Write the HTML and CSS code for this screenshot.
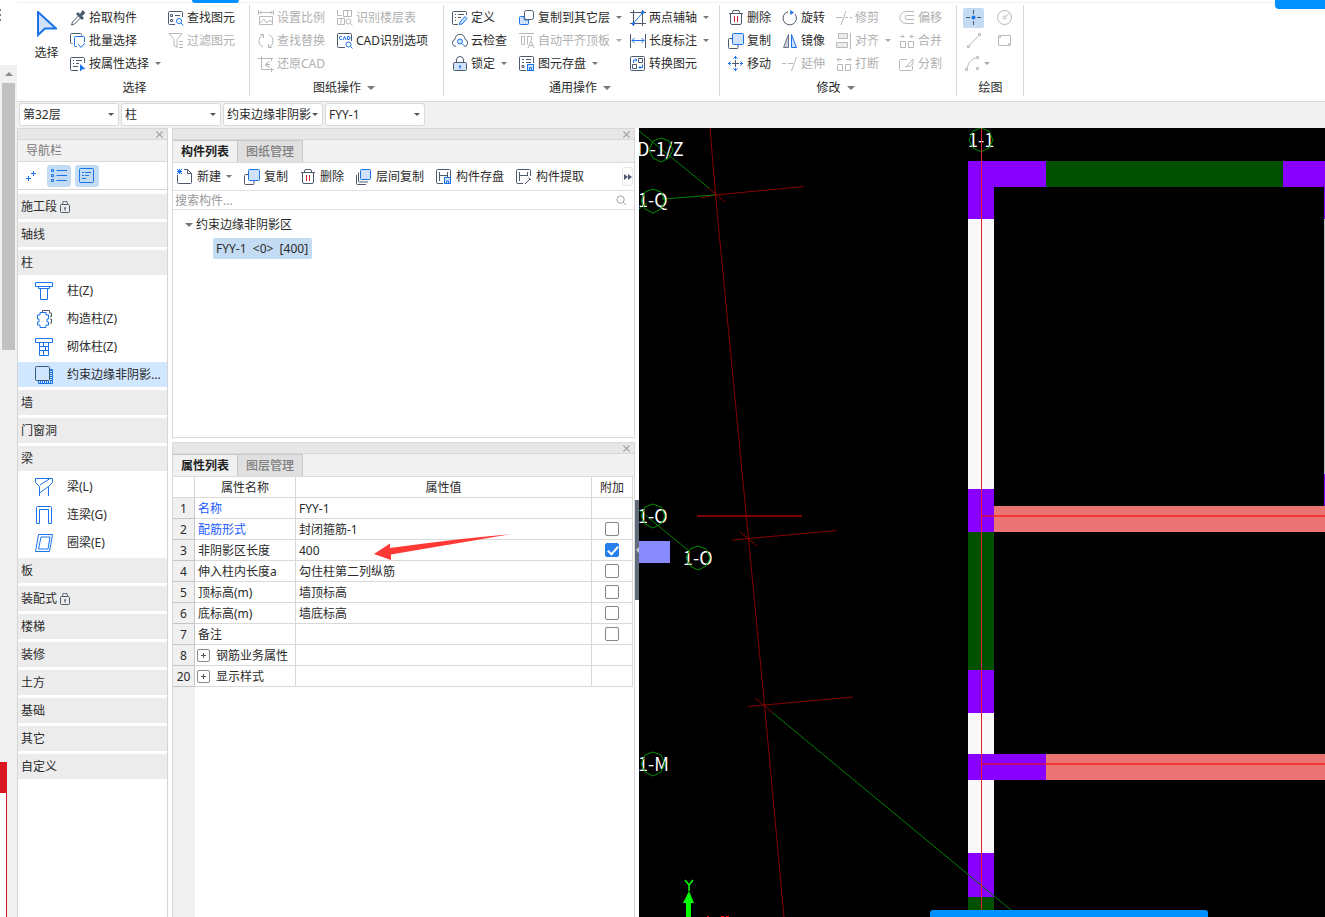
FILE: index.html
```html
<!DOCTYPE html>
<html lang="zh-CN">
<head>
<meta charset="utf-8">
<title>构件列表</title>
<link rel="stylesheet" href="styles.css">
</head>
<body>
<svg class="sprite" aria-hidden="true">
  <symbol id="copy" viewBox="0 0 16 16"><path class="d" d="M4 5.500H1.500a1 1 0 0 0-1 1v8a1 1 0 0 0 1 1H9a1 1 0 0 0 1-1V12"/><rect class="bf" x="4.500" y=".500" width="11" height="11" rx="1"/></symbol>
  <symbol id="trash" viewBox="0 0 16 16"><path class="d" d="M1 3.500h14M4.500 3.500V2A1.500 1.500 0 0 1 6 .500h4A1.500 1.500 0 0 1 11.500 2v1.500M2.500 3.500V13a1.500 1.500 0 0 0 1.500 1.500h8a1.500 1.500 0 0 0 1.500-1.500V3.500"/><path class="r" d="M6.500 6v6M9.500 6v6"/></symbol>
  <symbol id="lock" viewBox="0 0 10 12"><rect class="d" x=".500" y="3.500" width="9" height="8" rx="1"/><path class="d" d="M2.500 3.500V2.500a2 2 0 0 1 5 0v1"/><path class="d" d="M5 6.500v3M4 7h2"/></symbol>
</svg>
<div class="page">
  <aside class="strip">
    <div class="strip-top"><i></i><i></i><i></i></div>
    <div class="strip-arrow"><span class="up"></span></div>
    <div class="strip-thumb"></div>
    <div class="strip-red"></div>
    <div class="strip-frame"></div>
  </aside>
  <div class="app">
    <span class="blob blob-left"></span><span class="blob blob-right"></span><span class="blob blob-bottom"></span>
    <header class="ribbon">
      <section class="group g-select">
        <button class="big"><svg class="bigicon" viewBox="0 0 20 26"><path class="bf" d="M1 1v23l7-6.500h11z"/></svg><span>选择</span></button>
        <button class="tool c2"><svg viewBox="0 0 16 16"><path class="d" d="M1.500 15l1-3L9 5.500l2 2L4.500 14z"/><path class="df" d="M6 4l2-2 2 2 2-3c1-1.500 4 1.500 2.500 3L12 6l2 2-2 2z"/></svg>拾取构件</button>
        <button class="tool c3"><svg viewBox="0 0 16 16"><path class="d" d="M7 14.500H1.500a1 1 0 0 1-1-1v-11a1 1 0 0 1 1-1h12a1 1 0 0 1 1 1V7M7 5.500h5M2.500 4.500h2v2h-2zM2.500 9.500h2v2h-2z"/><circle class="b" cx="11" cy="11" r="2.500"/><path class="b" d="M13 13l2.500 2.500"/></svg>查找图元</button>
        <button class="tool c2"><svg viewBox="0 0 16 16"><path class="d" d="M2.500 10.500h-1a1 1 0 0 1-1-1v-8a1 1 0 0 1 1-1h9a1 1 0 0 1 1 1v1"/><path class="b" d="M7 13.500H5.500a1 1 0 0 1-1-1v-8a1 1 0 0 1 1-1h8a1 1 0 0 1 1 1V9M8 11l3 3.500 4-4.500"/></svg>批量选择</button>
        <button class="tool c3" disabled><svg viewBox="0 0 16 16"><path class="g" d="M1 .500h13L9 6.500v8l-3-2v-6zM11 8.500h4M11 11.500h4M11 14.500h4"/></svg>过滤图元</button>
        <button class="tool c2"><svg viewBox="0 0 16 16"><path class="d" d="M8 14.500H1.500a1 1 0 0 1-1-1v-11a1 1 0 0 1 1-1h12a1 1 0 0 1 1 1V7M3 4.500h1M6 4.500h6M3 7.500h1M6 7.500h3M3 10.500h5"/><path class="bs" d="M10 8l5.500 5-3 .300-2.500 2.200z"/></svg>按属性选择<i class="caret"></i></button>
        <h2>选择</h2>
      </section>
      <section class="group g-draw">
        <button class="tool" disabled><svg viewBox="0 0 16 16"><path class="g" d="M1 2.500h14M.500 0v5M15.500 0v5M3 1v3M13 1v3M1.500 6.500h13v8h-13zM2 13l4-4 3 4 3-3 2.500 3"/></svg>设置比例</button>
        <button class="tool" disabled><svg viewBox="0 0 16 16"><path class="g" d="M.500 0v5.500H5M6.500.500h8v6h-8zM10.500.500v6M.500 8.500v6h7v-6zM4 8.500v6"/><circle class="g" cx="11.500" cy="11.500" r="2.500"/><path class="g" d="M13.500 13.500l2 2"/></svg>识别楼层表</button>
        <button class="tool" disabled><svg viewBox="0 0 16 16"><path class="g" d="M5 14A6.500 6.500 0 0 1 5 2M2 1.500h3.500V5M11 2a6.500 6.500 0 0 1 0 12M14 14.500h-3.500V11"/></svg>查找替换</button>
        <button class="tool"><svg viewBox="0 0 16 16"><path class="d" d="M8 14.500H1.500a1 1 0 0 1-1-1v-12a1 1 0 0 1 1-1h12a1 1 0 0 1 1 1V8"/><path class="b" d="M5 3.500H3.500C2 3.500 2 6.500 3.500 6.500H5M6 7l1.500-3.500L9 7M10.500 3.500v3H12c1.500 0 1.500-3 0-3z"/><circle class="b" cx="11.500" cy="11.500" r="2.500"/><path class="b" d="M13.500 13.500l2 2"/></svg>CAD识别选项</button>
        <button class="tool" disabled><svg viewBox="0 0 16 16"><path class="g" d="M0 2.500h15M3.500 0v13.500H16M13.500 2v3M13.500 12v4M12 6c-2 0-4 1-4 2.500S9 11 12 11M7 8.500h5M10 6.500l-2 2 2 2"/></svg>还原CAD</button>
        <h2>图纸操作<i class="caret large"></i></h2>
      </section>
      <section class="group g-common">
        <button class="tool"><svg viewBox="0 0 16 16"><path class="d" d="M6 14.500H1.500a1 1 0 0 1-1-1v-11a1 1 0 0 1 1-1h12a1 1 0 0 1 1 1V5M3 4.500h1M6 4.500h6M3 7.500h1M6 7.500h3M3 10.500h1"/><path class="bf" d="M13 6.500l2 2-5 5.500-2.500.500.500-2.500z"/></svg>定义</button>
        <button class="tool"><svg viewBox="0 0 16 16"><path class="bf" d="M5 6.500H1.500a1 1 0 0 0-1 1v6a1 1 0 0 0 1 1h7a1 1 0 0 0 1-1V10H6a1 1 0 0 1-1-1z"/><rect class="d" x="5.500" y=".500" width="9" height="9" rx="2"/></svg>复制到其它层<i class="caret"></i></button>
        <button class="tool"><svg viewBox="0 0 16 16"><path class="d" d="M3.500 0v16M12.500 0v16M0 2.500h16M0 13.500h16"/><path class="b" d="M2 15L14 1"/><circle class="bs" cx="3.500" cy="13.500" r="1.500"/><circle class="bs" cx="12.500" cy="2.500" r="1.500"/></svg>两点辅轴<i class="caret"></i></button>
        <button class="tool"><svg viewBox="0 0 16 16"><path class="d" d="M4 13.500a3.700 3.700 0 0 1-1-7.200 5 5 0 0 1 10 0 3.700 3.700 0 0 1-.500 7.200"/><circle class="bf" cx="8" cy="8.500" r="2.500"/><path class="b" d="M10 10.500l3 3"/></svg>云检查</button>
        <button class="tool" disabled><svg viewBox="0 0 16 16"><path class="g" d="M0 .500h15M2.500 3.500h3v8h-3zM8.500 11.500v-8h4v4M9 15l3-7 3 7M10 12.500h4"/></svg>自动平齐顶板<i class="caret"></i></button>
        <button class="tool"><svg viewBox="0 0 16 16"><path class="d" d="M.500 1v14M15.500 1v14"/><path class="b" d="M2 7.500h12M4.500 5L2 7.500 4.500 10M11.500 5L14 7.500 11.500 10"/></svg>长度标注<i class="caret"></i></button>
        <button class="tool"><svg viewBox="0 0 16 16"><path class="d" d="M4.500 6V4a3.500 3.500 0 0 1 7 0v2"/><rect class="lb" x="1.500" y="6.500" width="13" height="8" rx="1"/><path class="b" d="M8 9v4M7 10.500h2"/></svg>锁定<i class="caret"></i></button>
        <button class="tool"><svg viewBox="0 0 16 16"><path class="d" d="M7 14.500H1.500a1 1 0 0 1-1-1v-12a1 1 0 0 1 1-1h12a1 1 0 0 1 1 1V7M7 3.500h5M7 6.500h5M3 3.500h2M3 6.500h2M3 9.500h2v2H3z"/><rect class="bf" x="8.500" y="8.500" width="6" height="6"/><path class="b" d="M10.500 14v-2.500h2V14"/></svg>图元存盘<i class="caret"></i></button>
        <button class="tool"><svg viewBox="0 0 16 16"><rect class="d" x=".500" y=".500" width="14" height="14" rx="1"/><path class="d" d="M8.500 2.500h4v4h-4zM2.500 8.500h4v4h-4z"/><path class="b" d="M3.500 7V4H7M5.500 2.500L7 4 5.500 5.500M12.500 8.500v3H9M10.500 10L9 11.500l1.500 1.500"/></svg>转换图元</button>
        <h2>通用操作<i class="caret large"></i></h2>
      </section>
      <section class="group g-modify">
        <button class="tool"><svg><use href="#trash"/></svg>删除</button>
        <button class="tool"><svg viewBox="0 0 16 16"><path class="d" d="M6 1.700a6.700 6.700 0 1 0 7 2.300"/><path class="bs" d="M8 0l4 2.500L8.500 5z"/></svg>旋转</button>
        <button class="tool" disabled><svg viewBox="0 0 16 16"><path class="g" d="M0 7.500h6M9 7.500h3M14 7.500h2M5 15L10 1"/></svg>修剪</button>
        <button class="tool" disabled><svg viewBox="0 0 16 16"><path class="g" d="M15 1.500H7a6 6 0 0 0 0 12h8M15 5.500H8a2 2 0 0 0 0 4h7"/></svg>偏移</button>
        <button class="tool"><svg><use href="#copy"/></svg>复制</button>
        <button class="tool"><svg viewBox="0 0 16 16"><path class="df2" d="M6.500 1.500v13h-5z"/><path class="bf" d="M9.500 1.500v13h5z"/></svg>镜像</button>
        <button class="tool" disabled><svg viewBox="0 0 16 16"><path class="g gf" d="M2.500.500h9v5h-9zM.500 9.500h11v5H.500z"/><path class="g" d="M14.500 0v16"/></svg>对齐<i class="caret"></i></button>
        <button class="tool" disabled><svg viewBox="0 0 16 16"><path class="g" d="M1.500 8.500h5v6h-5zM9.500 8.500h5v6h-5zM1 3.500h4M3 1.500l2 2-2 2M15 3.500h-4M13 1.500l-2 2 2 2"/></svg>合并</button>
        <button class="tool"><svg viewBox="0 0 16 16"><path class="d" d="M7.500 4v7M4 7.500h7"/><path class="b" d="M7.500 0v3M7.500 12v3M0 7.500h3M12 7.500h3M5.500 2.500l2-2 2 2M5.500 12.500l2 2 2-2M2.500 5.500l-2 2 2 2M12.500 5.500l2 2-2 2"/></svg>移动</button>
        <button class="tool" disabled><svg viewBox="0 0 16 16"><path class="g" d="M0 7.500h4M6 7.500h5M9.500 15L14.500 1"/></svg>延伸</button>
        <button class="tool" disabled><svg viewBox="0 0 16 16"><path class="g" d="M1.500 8.500h5v6h-5zM9.500 8.500h5v6h-5zM1 3.500h5M3 1.500l-2 2 2 2M10 3.500h5M13 1.500l2 2-2 2"/></svg>打断</button>
        <button class="tool" disabled><svg viewBox="0 0 16 16"><path class="g" d="M8 3.500H1.500a1 1 0 0 0-1 1v9a1 1 0 0 0 1 1h11a1 1 0 0 0 1-1V10M8 10l6-7v5l-4 2.500H6"/></svg>分割</button>
        <h2>修改<i class="caret large"></i></h2>
      </section>
      <section class="group g-paint">
        <button class="tool active" aria-label="点"><svg viewBox="0 0 16 16"><path class="d" d="M7.500 0v4M7.500 11v4M0 7.500h4M11 7.500h4"/><circle class="bs" cx="7.500" cy="7.500" r="2"/></svg></button>
        <button class="tool" disabled aria-label="圆"><svg viewBox="0 0 16 16"><circle class="g" cx="7.500" cy="7.500" r="7"/><circle class="g" cx="7.500" cy="7.500" r="1.500"/><path class="g" d="M8.500 6.500l3.500-3"/></svg></button>
        <button class="tool" disabled aria-label="直线"><svg viewBox="0 0 16 16"><path class="g" d="M3 12.500l10-10M1.500 12.500h2v2h-2zM12.500.500h2v2h-2z"/></svg></button>
        <button class="tool" disabled aria-label="矩形"><svg viewBox="0 0 16 16"><path class="g" d="M1.500 2.500h12v10h-12zM3.500 2.500v2M1.500 4.500h2M11.500 12.500v-2h2"/></svg></button>
        <button class="tool" disabled aria-label="弧"><svg viewBox="0 0 16 16"><path class="g" d="M2 13C3 7 6 3 12 1.500M.500 12.500h2v2h-2zM11.500.500h2v2h-2zM11.500 11.500h2v2h-2z"/></svg><i class="caret"></i></button>
        <h2>绘图</h2>
      </section>
    </header>
    <nav class="levels">
      <label class="pick"><select aria-label="楼层"><option>第32层</option></select></label>
      <label class="pick"><select aria-label="构件类型"><option>柱</option></select></label>
      <label class="pick"><select aria-label="构件"><option>约束边缘非阴影</option></select></label>
      <label class="pick"><select aria-label="名称"><option>FYY-1</option></select></label>
    </nav>
    <main class="work">
      <aside class="nav">
        <div class="bar"><button class="close" aria-label="关闭导航栏"></button></div>
        <h3>导航栏</h3>
        <div class="navtools">
          <button aria-label="添加"><svg viewBox="0 0 16 16"><path class="b" d="M8 5.500h5M10.500 3v5M3 10.500h5M5.500 8v5"/></svg></button>
          <button class="on" aria-label="列表"><svg viewBox="0 0 16 16"><path class="b" d="M5.500 2.500H16M5.500 7.500H16M5.500 12.500H16M.500 1.500h2v2h-2zM.500 6.500h2v2h-2zM.500 11.500h2v2h-2z"/></svg></button>
          <button class="on" aria-label="详细"><svg viewBox="0 0 16 16"><rect class="b" x=".500" y=".500" width="14" height="14" rx="1"/><path class="b" d="M3 4.500h2M6 4.500h6M3 7.500h2M6 7.500h4M3 10.500h4"/></svg></button>
        </div>
        <ul class="cats">
          <li>施工段<svg class="lock"><use href="#lock"/></svg></li>
          <li>轴线</li>
          <li>柱</li>
          <li class="sub"><svg viewBox="0 0 18 18"><path class="b" d="M.500.500h17v4H.500zM3.500 4.500v2h11v-2M5.500 6.500v11h7v-11"/></svg>柱(Z)</li>
          <li class="sub"><svg viewBox="0 0 18 18"><path class="d" d="M7.500 2V.500h7V3h2v3.500H15M15 9h1.500v4H15"/><path class="b" d="M5 2.500h6V5h2.500v4H12v3h1.500v3H11v2.500H5V15H2.500v-3H4V9H2.500V5H5z"/></svg>构造柱(Z)</li>
          <li class="sub"><svg viewBox="0 0 18 18"><path class="b" d="M.500.500h17v4H.500zM4.500 4.500v13h9v-13M4.500 8.500h9M4.500 12.500h9M8.500 4.500v4M10.500 8.500v4M8.500 12.500v5"/></svg>砌体柱(Z)</li>
          <li class="sub chosen"><svg viewBox="0 0 18 18"><path class="bd" d="M3 16h13V4"/><path class="b" d="M3.500 15v2.500h14v-14H15"/><rect class="dl" x=".500" y=".500" width="14" height="14" rx="1"/></svg>约束边缘非阴影...</li>
          <li>墙</li>
          <li>门窗洞</li>
          <li>梁</li>
          <li class="sub"><svg viewBox="0 0 18 18"><path class="b" d="M.500.500h17v4l-4 4V18M.500.500v4l4 4V18M5 7L15 .500M4.500 15l9-6.500"/></svg>梁(L)</li>
          <li class="sub"><svg viewBox="0 0 18 18"><path class="b" d="M1.500 17.500v-16a1 1 0 0 1 1-1h13a1 1 0 0 1 1 1v16h-3v-14h-9v14z"/></svg>连梁(G)</li>
          <li class="sub"><svg viewBox="0 0 18 18"><path class="b" d="M3.500.500h14l-3 17H.500zM6 3h9l-2 12H3.500z"/></svg>圈梁(E)</li>
          <li>板</li>
          <li>装配式<svg class="lock"><use href="#lock"/></svg></li>
          <li>楼梯</li>
          <li>装修</li>
          <li>土方</li>
          <li>基础</li>
          <li>其它</li>
          <li>自定义</li>
        </ul>
      </aside>
      <div class="panels">
        <section class="panel list">
          <div class="bar"><button class="close" aria-label="关闭构件列表"></button></div>
          <div class="tabs"><button class="tab current">构件列表</button><button class="tab">图纸管理</button></div>
          <div class="tools">
            <button class="tool"><svg viewBox="0 0 16 16"><path class="d" d="M.500 6v7.500a1 1 0 0 0 1 1h12a1 1 0 0 0 1-1V4.500l-4-4H7M10.500.500v4h4"/><path class="b" d="M0 0l5 5M5 0L0 5M2.500 0v5M0 2.500h5"/></svg>新建<i class="caret"></i></button>
            <button class="tool"><svg><use href="#copy"/></svg>复制</button>
            <button class="tool"><svg><use href="#trash"/></svg>删除</button>
            <button class="tool"><svg viewBox="0 0 16 16"><path class="d" d="M2.500 3.500V12a1 1 0 0 0 1 1h8.500M.500 6v8.500a1 1 0 0 0 1 1H10"/><rect class="bf" x="4.500" y=".500" width="10" height="10" rx="1"/></svg>层间复制</button>
            <button class="tool"><svg viewBox="0 0 16 16"><path class="d" d="M7 14.500H1.500a1 1 0 0 1-1-1v-12a1 1 0 0 1 1-1h12a1 1 0 0 1 1 1V8M3.500 12V3M3.500 6.500h8M11.500 3v5"/><rect class="bf" x="8.500" y="8.500" width="6" height="6"/><path class="b" d="M10.500 14v-2h2v2"/></svg>构件存盘</button>
            <button class="tool"><svg viewBox="0 0 16 16"><path class="d" d="M7 14.500H1.500a1 1 0 0 1-1-1v-12a1 1 0 0 1 1-1h12a1 1 0 0 1 1 1V7M3.500 12V3M3.500 6.500h8M11.500 3v4M9 15l5-5M12.500 8.500l2.500 2.500"/></svg>构件提取</button>
            <button class="more" aria-label="更多"><i></i><i></i></button>
          </div>
          <div class="search"><input type="text" aria-label="搜索构件" placeholder="搜索构件..."><svg viewBox="0 0 12 12"><circle cx="5" cy="5" r="4"/><path d="M8 8l3 3"/></svg></div>
          <div class="tree"><div class="root"><i class="caret large"></i>约束边缘非阴影区</div><div class="leaf">FYY-1&nbsp; &lt;0&gt;&nbsp; [400]</div></div>
        </section>
        <section class="panel props">
          <div class="bar"><button class="close" aria-label="关闭属性列表"></button></div>
          <div class="tabs"><button class="tab current">属性列表</button><button class="tab">图层管理</button></div>
          <div class="sheet">
            <table>
              <colgroup><col class="c-num"><col class="c-name"><col><col class="c-add"></colgroup>
              <thead><tr><th></th><th>属性名称</th><th>属性值</th><th>附加</th></tr></thead>
              <tbody>
                <tr><th>1</th><td class="link">名称</td><td>FYY-1</td><td></td></tr>
                <tr><th>2</th><td class="link">配筋形式</td><td>封闭箍筋-1</td><td><input type="checkbox" aria-label="配筋形式附加"></td></tr>
                <tr><th>3</th><td>非阴影区长度</td><td>400</td><td><input type="checkbox" aria-label="非阴影区长度附加" checked></td></tr>
                <tr><th>4</th><td>伸入柱内长度a</td><td>勾住柱第二列纵筋</td><td><input type="checkbox" aria-label="伸入柱内长度附加"></td></tr>
                <tr><th>5</th><td>顶标高(m)</td><td>墙顶标高</td><td><input type="checkbox" aria-label="顶标高附加"></td></tr>
                <tr><th>6</th><td>底标高(m)</td><td>墙底标高</td><td><input type="checkbox" aria-label="底标高附加"></td></tr>
                <tr><th>7</th><td>备注</td><td></td><td><input type="checkbox" aria-label="备注附加"></td></tr>
                <tr><th>8</th><td><button class="plus" aria-label="展开钢筋业务属性"></button>钢筋业务属性</td><td></td><td></td></tr>
                <tr><th>20</th><td><button class="plus" aria-label="展开显示样式"></button>显示样式</td><td></td><td></td></tr>
              </tbody>
            </table>
            <div class="below"></div>
            <svg class="pointer" viewBox="0 0 138 28"><path d="M0 20L16 9.500v4.500Q80 5 138 0 80 10 17 20.500v5.500z"/></svg>
          </div>
        </section>
        <button class="grip" aria-label="折叠"></button>
      </div>
      <div class="canvas">
        <svg class="drawing">
          <g transform="translate(-639 -128)" shape-rendering="crispEdges">
            <path fill="#8800ff" d="M968 161h78v26h-52v32h-26zM1283 161h42v26h-42zM968 489h26v43h-26zM968 670h26v43h-26zM968 754h78v26h-78zM968 853h26v44h-26zM1324 187h1v32h-1zM1324 474h1v58h-1z"/>
            <path fill="#005000" d="M1046 161h237v26h-237zM968 532h26v138h-26zM968 897h26v20h-26z"/>
            <path fill="#f8f8f8" d="M968 219h26v270h-26zM968 713h26v41h-26zM968 780h26v73h-26z"/>
            <path fill="#bbb" d="M1324 219h1v255h-1z"/>
            <path fill="#ea7373" d="M994 506h1200v26H994zM1046 754h1148v26H1046z"/>
            <path fill="#f93437" d="M994 515h1200v2H994zM1046 763h1148v2H1046z"/>
            <path fill="#bd0a75" d="M981 515h13v2h-13zM981 763h65v2h-65z"/>
            <path fill="#800000" d="M697 515h105v2H697z"/>
            <path fill="#8a8aff" d="M639 541h31v22h-31z"/>
          </g>
          <g transform="translate(-639 -128)" fill="none">
            <path stroke="#8a0000" d="M710 128l5.500 67 33 344 16 166 19.500 212M701 198l14-3 89-8.500M707 187l18 15M732 540l105-9.500M740 532l17 14M748 706.500l105-9.500M755 698l18 15"/>
            <path stroke="#008000" d="M639 131l70 57M662 199l53-4M639 510l50 41M773 713l238 197M639 209l8-6"/>
            <g class="axis"><text x="637" y="156">D-1/Z</text><text x="638" y="207">1-Q</text><text x="968" y="147">1-1</text><text x="638" y="523">1-O</text><text x="683" y="565">1-O</text><text x="638" y="771">1-M</text></g>
            <g stroke="#009000">
              <path id="ring" d="M661 138l8 3 4 9-4 8-8 4-8-4-4-8 4-9z"/>
              <use href="#ring" x="-8" y="51"/><use href="#ring" x="320" y="-10"/><use href="#ring" x="-8" y="366"/><use href="#ring" x="37" y="408"/><use href="#ring" x="-8" y="614"/>
            </g>
            <rect x="981" y="128" width="1" height="1200" fill="#e02030"/>
            <path stroke="#0f0" stroke-width="1.500" d="M685 880l4 5 4-5M689 885v6"/>
            <path fill="#0f0" d="M689 891l5 12h-3v14h-5v-14h-3z"/>
            <path stroke="red" d="M707 916.500h2M721 916.500h3M726 916.500h3"/>
          </g>
        </svg>
      </div>
    </main>
  </div>
</div>
</body>
</html>
```
FILE: styles.css
```css
* { box-sizing: border-box; }
html, body { height: 100%; margin: 0; }
body { font: 12px/16px "Noto Sans", "Noto Sans CJK SC", sans-serif; color: #2b2b2b; background: #fff; overflow: hidden; }
button, select, input { font: inherit; color: inherit; margin: 0; padding: 0; border: 0; background: none; }
h2, h3, ul { margin: 0; padding: 0; font-weight: 400; font-size: 12px; }
.sprite { position: absolute; width: 0; height: 0; }

.d { fill: none; stroke: #4d5a6e; }
.df { fill: #4d5a6e; }
.df2 { fill: #ccd0d8; stroke: #6b7587; }
.b { fill: none; stroke: #1a73e8; }
.bf { fill: #cfe2fa; stroke: #1a73e8; }
.lb { fill: #cfe2fa; stroke: #4d5a6e; }
.bs { fill: #1a73e8; }
.bd { fill: none; stroke: #1a73e8; stroke-width: 2; stroke-dasharray: 1 1; }
.dl { fill: #cfe5ff; stroke: #34597f; }
.r { fill: none; stroke: #d0202a; }
.g { fill: none; stroke: #b9b9b9; }
.gf { fill: #ececec; }

.page { display: flex; height: 100vh; }
.strip { flex: none; width: 17px; display: flex; flex-direction: column; background: #f0f0f0; }
.strip-top { height: 65px; padding-top: 9px; display: flex; flex-direction: column; gap: 3px; background: #fff; }
.strip-top i { width: 1px; height: 2px; background: #777; }
.strip-arrow { height: 18px; display: flex; align-items: center; justify-content: center; }
.up { border: 4px solid transparent; border-top: 0; border-bottom-color: #8a8a8a; }
.strip-thumb { height: 267px; margin: 0 2px 412px; background: #c1c1c1; }
.strip-red { width: 7px; height: 31px; background: #d9161f; }
.strip-frame { flex: 1; width: 7px; border-right: 1px solid #d9161f; background: #fff; }

.app { position: relative; flex: 1; min-width: 0; display: flex; flex-direction: column; }
.blob { position: absolute; z-index: 3; background: #0090ff; }
.blob-left { left: 175px; top: 0; width: 47px; height: 3px; border-radius: 0 0 6px 6px; }
.blob-right { right: 0; top: 0; width: 50px; height: 9px; border-radius: 0 0 0 4px; }
.blob-bottom { left: 913px; bottom: 0; width: 278px; height: 7px; border-radius: 3px 3px 0 0; }

.ribbon { flex: none; display: flex; padding-top: 3px; background: linear-gradient(#fff 2px, #f0f0f0 2px, #f0f0f0 3px, #fff 3px); border-bottom: 1px solid #d8d8d8; }
.group { position: relative; display: grid; grid-template-rows: repeat(3, 23px) 26px; padding-top: 3px; }
.group::after { content: ""; position: absolute; right: 0; top: 2px; bottom: 5px; width: 1px; background: #d9d9d9; }
.group h2 { grid-column: 1 / -1; display: flex; align-items: center; justify-content: center; gap: 6px; }
.g-select { grid-template-columns: 27px 88px 68px; column-gap: 10px; padding-left: 16px; padding-right: 14px; }
.g-draw { grid-template-columns: 68px 93px; column-gap: 11px; padding-left: 8px; padding-right: 14px; }
.g-common { grid-template-columns: 57px 101px 78px; column-gap: 10px; padding-left: 8px; padding-right: 12px; }
.g-modify { grid-template-columns: 43px 43px 52px 44px; column-gap: 11px; padding-left: 8px; padding-right: 14px; }
.g-paint { grid-template-columns: 24px 24px; column-gap: 7px; padding-left: 6px; padding-right: 6px; }
.c2 { grid-column: 2; }
.c3 { grid-column: 3; }
.tool { display: flex; align-items: center; gap: 3px; white-space: nowrap; }
.tool svg { flex: none; width: 16px; height: 16px; }
.tool:disabled { color: #b0b0b0; }
.g-paint .tool { width: 21px; height: 20px; align-self: center; justify-content: center; border-radius: 2px; }
.g-paint .active { background: #c3dbf3; }
.big { grid-row: 1 / 4; display: flex; flex-direction: column; align-items: center; padding-top: 5px; gap: 8px; white-space: nowrap; }
.bigicon { width: 20px; height: 26px; stroke-width: 2; }
.caret { flex: none; width: 0; margin-left: 3px; border: 3px solid transparent; border-top-color: #777; border-bottom: 0; }
.caret.large { margin-left: 0; border-width: 4px 4px 0; }
.g-paint .caret { margin: 0 -8px 0 0; }
:disabled .caret { border-top-color: #aaa; }

.levels { flex: none; display: flex; gap: 2px; height: 26px; padding: 1px 2px; background: #f1f1f1; }
.pick { position: relative; width: 100px; height: 23px; }
.pick select { width: 100%; height: 100%; padding: 0 8px 0 3px; appearance: none; border: 1px solid #d9d9d9; border-radius: 3px; background: #fff; }
.pick::after { content: ""; position: absolute; right: 5px; top: 10px; border: 3px solid transparent; border-top-color: #555; border-bottom: 0; }

.work { flex: 1; min-height: 0; display: flex; }
.bar { flex: none; height: 12px; display: flex; justify-content: flex-end; align-items: center; padding-right: 3px; background: #e7e7e7; border: 1px solid #d8d8d8; border-width: 1px 0; }
.close { position: relative; width: 9px; height: 9px; }
.close::before, .close::after { content: ""; position: absolute; left: 0; top: 4px; width: 9px; height: 1px; background: #999; transform: rotate(45deg); }
.close::after { transform: rotate(-45deg); }
.nav { flex: none; width: 151px; border: 1px solid #d5d5d5; border-width: 0 1px; }
.nav h3 { height: 22px; padding: 3px 8px; color: #777; background: #f1f1f1; border-bottom: 1px solid #dcdcdc; }
.navtools { display: flex; align-items: center; gap: 4px; height: 28px; padding-left: 1px; border-bottom: 1px solid #d5d5d5; }
.navtools button { width: 24px; height: 22px; border-radius: 3px; display: flex; align-items: center; justify-content: center; }
.navtools svg { width: 16px; height: 16px; }
.navtools .on { background: #c3dbf3; }
.cats { list-style: none; display: grid; gap: 3px; padding-top: 4px; }
.cats li { height: 25px; display: flex; align-items: center; gap: 3px; padding-left: 3px; background: #ececec; white-space: nowrap; }
.cats .sub { gap: 14px; padding-left: 17px; background: none; }
.cats .chosen { background: #d1e6ff; }
.sub svg { flex: none; width: 18px; height: 18px; }
.cats .lock { width: 10px; height: 12px; }

.panels { position: relative; flex: none; width: 467px; padding: 0 0 0 4px; margin-right: 4px; display: flex; flex-direction: column; gap: 4px; }
.panel { display: flex; flex-direction: column; border: 1px solid #d8d8d8; border-width: 0 1px 1px; background: #fff; }
.list { height: 310px; }
.props { flex: 1; min-height: 0; border-bottom: 0; }
.tabs { flex: none; display: flex; height: 23px; background: #f1f1f1; border-bottom: 1px solid #dcdcdc; }
.tab { width: 65px; color: #808080; background: #e0e0e0; border-right: 1px solid #c8c8c8; border-top: 1px solid #c8c8c8; font-weight: 500; }
.tab.current { color: #222; background: #f1f1f1; font-weight: 700; }
.tools { flex: none; display: flex; align-items: center; gap: 12px; height: 28px; padding: 0 1px 0 4px; border-bottom: 1px solid #e0e0e0; }
.tools .tool { gap: 4px; }
.tools .caret { margin-left: 1px; }
.more { width: 11px; height: 19px; margin-left: auto; border: 1px solid #e6e6e6; border-radius: 3px; display: flex; align-items: center; justify-content: center; }
.more i { border: 3px solid transparent; border-left: 4px solid #4d5a6e; border-right: 0; }
.search { flex: none; display: flex; align-items: center; height: 19px; padding: 0 7px 0 2px; border-bottom: 1px solid #e0e0e0; }
.search input { flex: 1; min-width: 0; height: 18px; outline: 0; }
.search input::placeholder { color: #999; opacity: 1; }
.search svg { width: 11px; height: 11px; fill: none; stroke: #999; }
.tree { padding: 3px 12px; }
.root { display: flex; align-items: center; gap: 3px; height: 24px; }
.leaf { width: max-content; margin: 1px 0 0 28px; height: 21px; line-height: 21px; padding: 0 4px 0 3px; border-radius: 2px; background: #c3dbf3; white-space: nowrap; }

.sheet { position: relative; flex: 1; display: flex; flex-direction: column; }
table { width: calc(100% - 1px); border-collapse: separate; border-spacing: 0; table-layout: fixed; }
.c-num { width: 22px; }
.c-name { width: 101px; }
.c-add { width: 41px; }
th, td { height: 21px; padding: 2px 0 0 3px; border: 1px solid #d9d9d9; border-width: 0 1px 1px 0; font-weight: 400; text-align: left; white-space: nowrap; }
th { padding: 2px 0 0; text-align: center; }
tbody th { background: #f0f0f0; border-color: #c6c6c6; }
td:last-child { padding: 0; text-align: center; }
.link { color: #1a5cff; }
input[type="checkbox"] { display: block; position: relative; width: 14px; height: 14px; margin: 0 auto; appearance: none; border: 1px solid #858585; border-radius: 2px; background: #fff; }
input[type="checkbox"]:checked { background: #2680eb; border-color: #2680eb; }
input[type="checkbox"]:checked::after { content: ""; position: absolute; left: 4px; top: 0; width: 4px; height: 9px; border: solid #fff; border-width: 0 2px 2px 0; transform: rotate(42deg); }
.plus { width: 13px; height: 13px; margin: 0 6px 0 -1px; vertical-align: -1px; border: 1px solid #8a8a8a; border-radius: 2px; background: linear-gradient(#555, #555) center / 5px 1px no-repeat, linear-gradient(#555, #555) center / 1px 5px no-repeat; }
.below { flex: 1; width: 22px; background: #f0f0f0; }
.pointer { position: absolute; left: 201px; top: 57px; width: 138px; height: 28px; fill: #ff3935; }
.grip { position: absolute; right: -4px; top: 372px; width: 4px; height: 100px; background: #606c7a; }
.grip::after { content: ""; position: absolute; left: 1px; top: 47px; border: 3px solid transparent; border-left: 0; border-right-color: #ccc; }

.canvas { flex: 1; min-width: 0; background: #000; }
.drawing { display: block; width: 100%; height: 100%; }
.axis { fill: #fff; font: 18px "Noto Sans CJK SC", sans-serif; }
```
